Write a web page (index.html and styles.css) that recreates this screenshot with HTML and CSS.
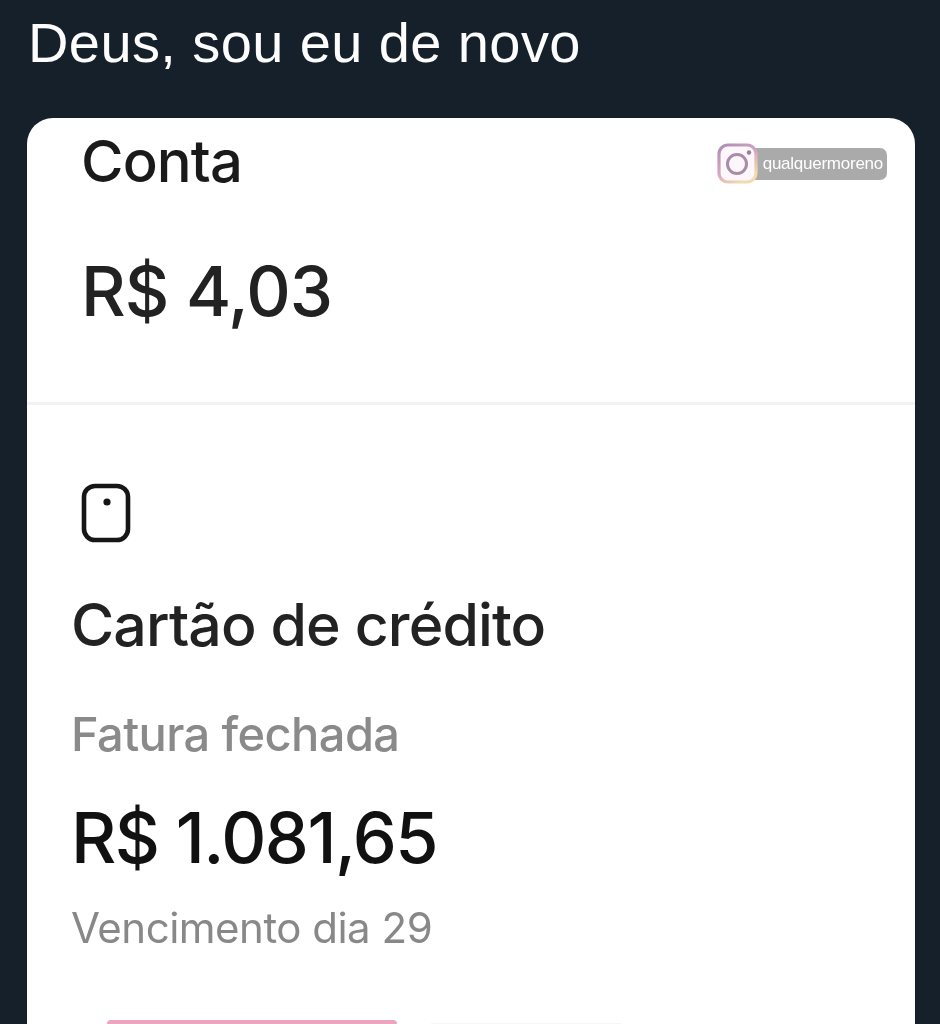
FILE: index.html
```html
<!DOCTYPE html>
<html lang="pt-BR">
<head>
<meta charset="utf-8">
<title>Deus, sou eu de novo</title>
<link rel="stylesheet" href="styles.css">
</head>
<body>
<h1 class="caption">Deus, sou eu de novo</h1>
<main class="card">
  <section class="account">
    <div class="account-head">
      <h2 class="account-title">Conta</h2>
      <div class="badge">
        <svg class="ig" width="42" height="42" viewBox="0 0 42 42" aria-hidden="true">
          <defs>
            <linearGradient id="igGrad" x1="0" y1="0" x2="0.6" y2="1">
              <stop offset="0" stop-color="#a98fb4"/>
              <stop offset="0.55" stop-color="#d5a6c0"/>
              <stop offset="1" stop-color="#f0dcae"/>
            </linearGradient>
          </defs>
          <rect x="2" y="2" width="37" height="37" rx="9" fill="#fdf6fb" stroke="url(#igGrad)" stroke-width="3.2"/>
          <circle cx="20" cy="21" r="9.5" fill="none" stroke="#a98ca6" stroke-width="3"/>
          <circle cx="32" cy="9.5" r="2.2" fill="#9a7f99"/>
        </svg>
        <span class="badge-label">qualquermoreno</span>
      </div>
    </div>
    <p class="account-value">R$ 4,03</p>
  </section>
  <section class="credit">
    <svg class="card-icon" width="50" height="60" viewBox="0 0 50 60" aria-hidden="true">
      <rect x="3" y="3" width="44" height="54" rx="11" fill="none" stroke="#161616" stroke-width="4.6"/>
      <circle cx="26" cy="19" r="3.6" fill="#161616"/>
    </svg>
    <h2 class="credit-title">Cartão de crédito</h2>
    <p class="credit-status">Fatura fechada</p>
    <p class="credit-value">R$ 1.081,65</p>
    <p class="credit-due">Vencimento dia 29</p>
    <div class="bar-row">
      <div class="progress"></div>
      <div class="ghost"></div>
    </div>
  </section>
</main>
</body>
</html>
```

FILE: styles.css
```css
html, body {
  margin: 0;
  padding: 0;
  height: 1024px;
  overflow: hidden;
}

body {
  background: #15202b;
  font-family: "Inter", "Liberation Sans", sans-serif;
  display: flex;
  flex-direction: column;
}

h1, h2, p {
  margin: 0;
  font-weight: 400;
}

.caption {
  flex: none;
  padding: 13px 0 0 28px;
  height: 105px;
  box-sizing: border-box;
  color: #fdfdfd;
  font-family: "Liberation Sans", sans-serif;
  font-size: 56px;
  line-height: 60px;
  letter-spacing: 0.4px;
  filter: blur(0.4px);
}

.card {
  margin: 13px 25px 0 27px;
  flex: none;
  height: 906px;
  background: #fff;
  border-radius: 26px 26px 0 0;
  color: #1a1a1a;
  filter: blur(0.7px);
}

.account {
  height: 287px;
  box-sizing: border-box;
  padding: 8px 28px 0 54px;
  border-bottom: 3px solid #f2f2f2;
}

.account-head {
  display: flex;
  justify-content: space-between;
  align-items: flex-start;
}

.account-title {
  font-size: 58px;
  line-height: 70px;
  letter-spacing: -0.9px;
  font-weight: 500;
}

.badge {
  display: flex;
  align-items: center;
  margin-top: 17px;
}

.ig {
  margin-right: -5px;
  position: relative;
  z-index: 1;
}

.badge-label {
  background: #aaaaaa;
  color: #fff;
  height: 32px;
  border-radius: 0 7px 7px 0;
  padding: 0 4px 0 9px;
  font-family: "Liberation Sans", sans-serif;
  font-size: 17px;
  line-height: 32px;
  letter-spacing: -0.25px;
}

.account-value {
  margin-top: 55px;
  font-size: 69px;
  line-height: 80px;
  letter-spacing: -0.9px;
  font-weight: 500;
  color: #222;
}

.credit {
  padding: 78px 0 0 44px;
}

.card-icon {
  display: block;
  margin-left: 10px;
}

.credit-title {
  margin-top: 47px;
  font-size: 59px;
  line-height: 70px;
  letter-spacing: -0.9px;
  font-weight: 500;
  color: #222;
}

.credit-status {
  margin-top: 46px;
  font-size: 47px;
  line-height: 56px;
  letter-spacing: -0.6px;
  font-weight: 500;
  color: #8a8a8a;
}

.credit-value {
  margin-top: 36px;
  font-size: 70px;
  line-height: 80px;
  letter-spacing: -1.5px;
  font-weight: 500;
  color: #111;
}

.credit-due {
  margin-top: 25px;
  font-size: 42px;
  line-height: 50px;
  letter-spacing: -0.5px;
  color: #888;
}

.bar-row {
  display: flex;
  gap: 34px;
  margin-top: 67px;
  padding-left: 36px;
}

.progress {
  width: 290px;
  height: 6px;
  background: #eba6bd;
  border-radius: 4px 4px 0 0;
}

.ghost {
  width: 190px;
  height: 3px;
  margin-top: 3px;
  background: #f6f6f6;
}
```
